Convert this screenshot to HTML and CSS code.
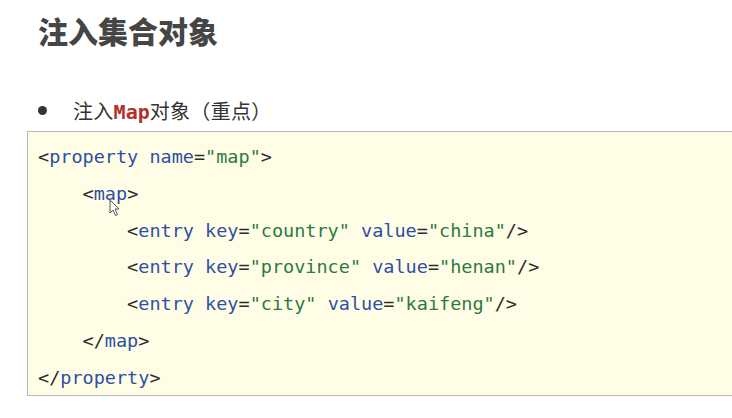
FILE: index.html
```html
<!DOCTYPE html>
<html lang="zh">
<head>
<meta charset="utf-8">
<link rel="stylesheet" href="styles.css">
</head>
<body>
<div class="page">
  <h1 class="title">注入集合对象</h1>
  <div class="bullet">
    <span class="dot"></span>
    <span class="btext">注入<span class="kw">Map</span>对象（重点）</span>
  </div>
  <div class="code">
    <div class="line"><span class="p">&lt;</span><span class="t">property</span> <span class="t">name</span><span class="p">=</span><span class="s">"map"</span><span class="p">&gt;</span></div>
    <div class="line">    <span class="p">&lt;</span><span class="t">map</span><span class="p">&gt;</span></div>
    <div class="line">        <span class="p">&lt;</span><span class="t">entry</span> <span class="t">key</span><span class="p">=</span><span class="s">"country"</span> <span class="t">value</span><span class="p">=</span><span class="s">"china"</span><span class="p">/&gt;</span></div>
    <div class="line">        <span class="p">&lt;</span><span class="t">entry</span> <span class="t">key</span><span class="p">=</span><span class="s">"province"</span> <span class="t">value</span><span class="p">=</span><span class="s">"henan"</span><span class="p">/&gt;</span></div>
    <div class="line">        <span class="p">&lt;</span><span class="t">entry</span> <span class="t">key</span><span class="p">=</span><span class="s">"city"</span> <span class="t">value</span><span class="p">=</span><span class="s">"kaifeng"</span><span class="p">/&gt;</span></div>
    <div class="line">    <span class="p">&lt;/</span><span class="t">map</span><span class="p">&gt;</span></div>
    <div class="line"><span class="p">&lt;/</span><span class="t">property</span><span class="p">&gt;</span></div>
    <svg class="cursor" width="12" height="18" viewBox="0 0 12 18"><path d="M1 1 L1 14 L4 11 L6.5 16.5 L8.5 15.5 L6 10 L10 10 Z" fill="#fff" stroke="#555" stroke-width="1"/></svg>
  </div>
</div>
</body>
</html>
```
FILE: styles.css
```css
html, body {
  margin: 0;
  padding: 0;
  background: #ffffff;
  overflow: hidden;
}
.page {
  width: 732px;
  height: 418px;
  overflow: hidden;
  display: flex;
  flex-direction: column;
}
.title {
  margin: 10px 0 0 38px;
  font-family: "Noto Sans CJK SC", sans-serif;
  font-weight: 900;
  font-size: 30px;
  line-height: 40px;
  color: #454545;
}
.bullet {
  display: flex;
  align-items: center;
  margin: 44px 0 0 38px;
  height: 32px;
  font-family: "Noto Sans CJK SC", sans-serif;
  font-size: 20px;
  letter-spacing: 0.3px;
  color: #333;
}
.dot {
  width: 9px;
  height: 9px;
  border-radius: 50%;
  background: #333;
  margin-right: 26px;
}
.kw {
  font-family: "DejaVu Sans Mono", monospace;
  font-weight: 700;
  font-size: 20px;
  letter-spacing: 0;
  color: #b3302b;
}
.code {
  position: relative;
  margin: 5px -30px 0 27px;
  border: 1px solid #b9b9b4;
  background: #fffde6;
  padding: 7px 0 0 10px;
  height: 256px;
  font-family: "DejaVu Sans Mono", monospace;
  font-size: 18.5px;
}
.line {
  white-space: pre;
  line-height: 36.8px;
  height: 36.8px;
}
.p { color: #2b2b2b; }
.t { color: #2e4fa6; }
.s { color: #2c7a3e; }
.cursor {
  position: absolute;
  left: 81px;
  top: 67px;
}
```
